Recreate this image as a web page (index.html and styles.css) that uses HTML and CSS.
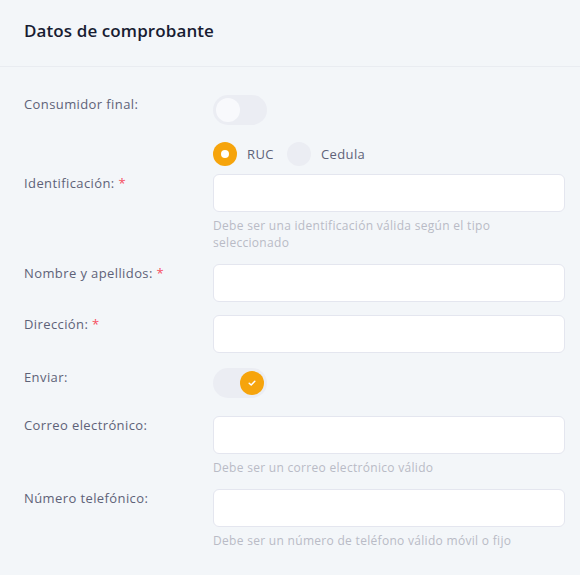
FILE: index.html
```html
<!DOCTYPE html>
<html lang="es">
<head>
<meta charset="utf-8">
<title>Datos de comprobante</title>
<link rel="stylesheet" href="styles.css">
</head>
<body>
<div class="card">
  <div class="card-header">
    <h3 class="card-title">Datos de comprobante</h3>
  </div>
  <div class="card-body">
    <div class="row row-toggle row-first">
      <label class="label">Consumidor final:</label>
      <div class="control">
        <span class="switch"><span class="knob"></span></span>
      </div>
    </div>
    <div class="row row-radios">
      <span class="label"></span>
      <div class="control radios">
        <span class="radio checked"></span><span class="radio-text">RUC</span>
        <span class="radio"></span><span class="radio-text">Cedula</span>
      </div>
    </div>
    <div class="row">
      <label class="label">Identificación: <span class="req">*</span></label>
      <div class="control">
        <input class="input" type="text">
        <div class="help">Debe ser una identificación válida según el tipo seleccionado</div>
      </div>
    </div>
    <div class="row">
      <label class="label">Nombre y apellidos: <span class="req">*</span></label>
      <div class="control"><input class="input" type="text"></div>
    </div>
    <div class="row">
      <label class="label">Dirección: <span class="req">*</span></label>
      <div class="control"><input class="input" type="text"></div>
    </div>
    <div class="row row-toggle">
      <label class="label">Enviar:</label>
      <div class="control">
        <span class="switch on"><span class="knob">
          <svg width="10" height="10" viewBox="0 0 10 10"><path d="M2.2 5.2 L4.2 7 L7.8 3.2" fill="none" stroke="#fff" stroke-width="1.5" stroke-linecap="round" stroke-linejoin="round"/></svg>
        </span></span>
      </div>
    </div>
    <div class="row">
      <label class="label">Correo electrónico:</label>
      <div class="control">
        <input class="input" type="text">
        <div class="help">Debe ser un correo electrónico válido</div>
      </div>
    </div>
    <div class="row">
      <label class="label">Número telefónico:</label>
      <div class="control">
        <input class="input" type="text">
        <div class="help">Debe ser un número de teléfono válido móvil o fijo</div>
      </div>
    </div>
  </div>
</div>
</body>
</html>
```
FILE: styles.css
```css
html, body {
  margin: 0;
  padding: 0;
  background: #f3f6f9;
}
body {
  font-family: "Open Sans", "Noto Sans", sans-serif;
  color: #3f4254;
}
.card {
  background: #f3f6f9;
}
.card-header {
  box-sizing: border-box;
  height: 67px;
  display: flex;
  align-items: center;
  padding: 0 24px 6px;
  border-bottom: 1px solid #e9ecf1;
}
.card-title {
  margin: 0;
  font-size: 17px;
  font-weight: 600;
  letter-spacing: 0.1px;
  color: #181c32;
}
.card-body {
  padding: 28px 15px 20px 24px;
}
.row {
  display: grid;
  grid-template-columns: 189px 1fr;
  margin-bottom: 13px;
}
.row-toggle {
  margin-top: 15px;
  margin-bottom: 18px;
}
.row-first {
  margin-top: 0;
  margin-bottom: 17px;
}
.row-radios {
  margin-bottom: 8px;
}
.label {
  font-size: 13px;
  line-height: 18px;
  letter-spacing: 0.4px;
  color: #5e6278;
}
.req {
  color: #f64e60;
}
.control {
  min-width: 0;
}
.input {
  display: block;
  box-sizing: border-box;
  width: 100%;
  height: 38px;
  margin: 0;
  border: 1px solid #e4e6ef;
  border-radius: 6px;
  background: #fff;
  outline: none;
}
.help {
  margin-top: 5px;
  font-size: 12px;
  line-height: 17px;
  letter-spacing: 0.3px;
  color: #b9bbc6;
}
.switch {
  display: flex;
  align-items: center;
  box-sizing: border-box;
  width: 54px;
  height: 30px;
  padding: 0 3px;
  border-radius: 15px;
  background: #ebedf3;
}
.knob {
  display: flex;
  align-items: center;
  justify-content: center;
  width: 24px;
  height: 24px;
  border-radius: 50%;
  background: #f8f9fc;
}
.switch.on {
  justify-content: flex-end;
}
.switch.on .knob {
  background: #f6a40c;
}
.radios {
  display: flex;
  align-items: center;
  height: 24px;
}
.radio {
  box-sizing: border-box;
  width: 24px;
  height: 24px;
  border-radius: 50%;
  background: #ebedf3;
}
.radio.checked {
  background: #f6a40c;
  position: relative;
}
.radio.checked::after {
  content: "";
  position: absolute;
  left: 8px;
  top: 8px;
  width: 8px;
  height: 8px;
  border-radius: 50%;
  background: #fff;
}
.radio-text {
  font-size: 13px;
  letter-spacing: 0.4px;
  color: #5e6278;
  margin-left: 10px;
  margin-right: 13px;
}
```
